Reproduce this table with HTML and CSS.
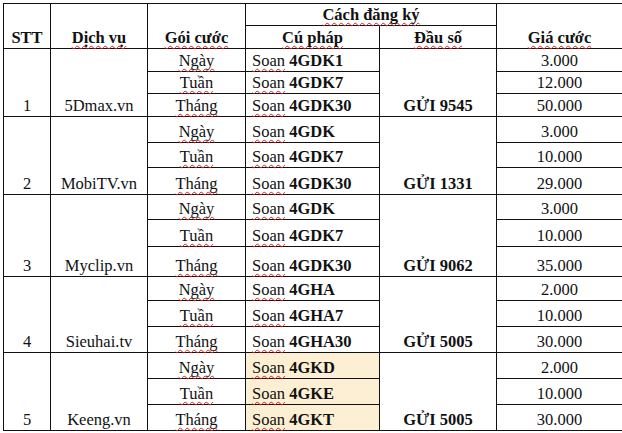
FILE: index.html
```html
<!DOCTYPE html>
<html lang="vi">
<head>
<meta charset="utf-8">
<link rel="stylesheet" href="styles.css">
</head>
<body>
<table class="grid">
  <colgroup>
    <col class="c-stt"><col class="c-dv"><col class="c-goi"><col class="c-cp"><col class="c-ds"><col class="c-gia">
  </colgroup>
  <thead>
    <tr class="h1">
      <th rowspan="2">STT</th>
      <th rowspan="2"><span class="sp">Dịch vụ</span></th>
      <th rowspan="2"><span class="sp">Gói cước</span></th>
      <th colspan="2"><span class="sp">Cách đăng ký</span></th>
      <th rowspan="2"><span class="sp">Giá cước</span></th>
    </tr>
    <tr class="h2">
      <th><span class="sp">Cú pháp</span></th>
      <th><span class="sp">Đầu số</span></th>
    </tr>
  </thead>
  <tbody>
    <tr class="r g1"><td rowspan="3">1</td><td rowspan="3">5Dmax.vn</td><td><span class="sp">Ngày</span></td><td class="cp"><span class="sp">Soan</span> <b>4GDK1</b></td><td rowspan="3" class="ds">GỬI 9545</td><td>3.000</td></tr>
    <tr class="r g1"><td><span class="sp">Tuần</span></td><td class="cp"><span class="sp">Soan</span> <b>4GDK7</b></td><td>12.000</td></tr>
    <tr class="r g1"><td><span class="sp">Tháng</span></td><td class="cp"><span class="sp">Soan</span> <b>4GDK30</b></td><td>50.000</td></tr>

    <tr class="r g2a"><td rowspan="3">2</td><td rowspan="3">MobiTV.vn</td><td><span class="sp">Ngày</span></td><td class="cp"><span class="sp">Soan</span> <b>4GDK</b></td><td rowspan="3" class="ds">GỬI 1331</td><td>3.000</td></tr>
    <tr class="r g2b"><td><span class="sp">Tuần</span></td><td class="cp"><span class="sp">Soan</span> <b>4GDK7</b></td><td>10.000</td></tr>
    <tr class="r g2c"><td><span class="sp">Tháng</span></td><td class="cp"><span class="sp">Soan</span> <b>4GDK30</b></td><td>29.000</td></tr>

    <tr class="r g3a"><td rowspan="3">3</td><td rowspan="3">Myclip.vn</td><td><span class="sp">Ngày</span></td><td class="cp"><span class="sp">Soan</span> <b>4GDK</b></td><td rowspan="3" class="ds">GỬI 9062</td><td>3.000</td></tr>
    <tr class="r g3b"><td><span class="sp">Tuần</span></td><td class="cp"><span class="sp">Soan</span> <b>4GDK7</b></td><td>10.000</td></tr>
    <tr class="r g3c"><td><span class="sp">Tháng</span></td><td class="cp"><span class="sp">Soan</span> <b>4GDK30</b></td><td>35.000</td></tr>

    <tr class="r g4a"><td rowspan="3">4</td><td rowspan="3">Sieuhai.tv</td><td><span class="sp">Ngày</span></td><td class="cp"><span class="sp">Soan</span> <b>4GHA</b></td><td rowspan="3" class="ds">GỬI 5005</td><td>2.000</td></tr>
    <tr class="r g4b"><td><span class="sp">Tuần</span></td><td class="cp"><span class="sp">Soan</span> <b>4GHA7</b></td><td>10.000</td></tr>
    <tr class="r g4c"><td><span class="sp">Tháng</span></td><td class="cp"><span class="sp">Soan</span> <b>4GHA30</b></td><td>30.000</td></tr>

    <tr class="r g5"><td rowspan="3">5</td><td rowspan="3">Keeng.vn</td><td><span class="sp">Ngày</span></td><td class="cp hl"><span class="sp">Soan</span> <b>4GKD</b></td><td rowspan="3" class="ds">GỬI 5005</td><td>2.000</td></tr>
    <tr class="r g5"><td><span class="sp">Tuần</span></td><td class="cp hl"><span class="sp">Soan</span> <b>4GKE</b></td><td>10.000</td></tr>
    <tr class="r g5"><td><span class="sp">Tháng</span></td><td class="cp hl"><span class="sp">Soan</span> <b>4GKT</b></td><td>30.000</td></tr>
  </tbody>
</table>
</body>
</html>
```
FILE: styles.css
```css
html, body {
  margin: 0;
  padding: 0;
  background: #ffffff;
}
body {
  padding: 3px 0 0 3px;
  font-family: "Liberation Serif", "Times New Roman", serif;
  font-size: 16.5px;
  color: #111111;
}
.grid {
  border-collapse: collapse;
  table-layout: fixed;
  width: 619px;
}
.c-stt { width: 47px; }
.c-dv { width: 97px; }
.c-goi { width: 98px; }
.c-cp { width: 134px; }
.c-ds { width: 117px; }
.c-gia { width: 126px; }

.grid th, .grid td {
  border: 1px solid #111111;
  padding: 0 2px 1px 2px;
  text-align: center;
  vertical-align: bottom;
  line-height: 19px;
  white-space: nowrap;
}
.grid th { font-weight: bold; }
.h1 { height: 22px; }
.h2 { height: 23px; }
.g1 { height: 22.7px; }
.g2a { height: 26px; }
.g2b { height: 25px; }
.g2c { height: 27px; }
.g3a { height: 25px; }
.g3b { height: 27px; }
.g3c { height: 30px; }
.g4a { height: 24px; }
.g4b { height: 26px; }
.g4c { height: 26px; }
.g5 { height: 26px; }

.grid td.cp {
  text-align: left;
  padding-left: 6px;
}
.grid td.hl { background: #fcefd3; }
.grid td.ds { font-weight: bold; }
.sp {
  text-decoration: underline wavy #d42020;
  text-decoration-thickness: 1px;
  text-underline-offset: 2px;
  text-decoration-skip-ink: none;
}
```
